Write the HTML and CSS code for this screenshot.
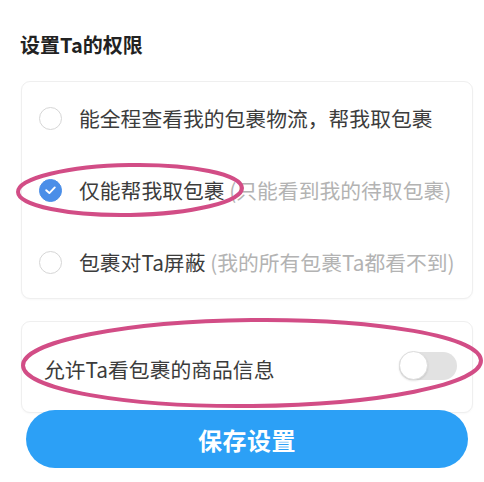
FILE: index.html
```html
<!DOCTYPE html>
<html lang="zh-CN">
<head>
<meta charset="utf-8">
<link rel="stylesheet" href="styles.css">
</head>
<body>
<div class="page">
  <h1 class="title">设置Ta的权限</h1>
  <div class="card options">
    <div class="row">
      <span class="radio"></span>
      <span class="label">能全程查看我的包裹物流，帮我取包裹</span>
    </div>
    <div class="row">
      <span class="radio checked">
        <svg viewBox="0 0 22 22" width="22" height="22"><polyline points="6.5,11.2 9.8,14.2 15.5,8.3" fill="none" stroke="#fff" stroke-width="2" stroke-linecap="round" stroke-linejoin="round"/></svg>
      </span>
      <span class="label">仅能帮我取包裹 <span class="hint">(只能看到我的待取包裹)</span></span>
    </div>
    <div class="row">
      <span class="radio"></span>
      <span class="label">包裹对Ta屏蔽 <span class="hint">(我的所有包裹Ta都看不到)</span></span>
    </div>
  </div>
  <div class="card switch-card">
    <span class="label">允许Ta看包裹的商品信息</span>
    <span class="toggle"><span class="knob"></span></span>
  </div>
  <button class="save">保存设置</button>
  <svg class="marks" viewBox="0 0 484 482" width="484" height="482">
    <ellipse cx="130" cy="190" rx="112" ry="25" fill="none" stroke="#d24d86" stroke-width="4" transform="rotate(-1 130 190)"/>
    <ellipse cx="252" cy="363" rx="229" ry="43" fill="none" stroke="#d24d86" stroke-width="4" transform="rotate(-0.6 252 363)"/>
  </svg>
</div>
</body>
</html>
```

FILE: styles.css
```css
* { box-sizing: border-box; }
html, body { margin: 0; padding: 0; background: #fff; }
body {
  font-family: "Noto Sans CJK SC", "Noto Sans", sans-serif;
  color: #3a3a3a;
}
.page {
  position: relative;
  width: 484px;
  height: 482px;
  padding-top: 30px;
  overflow: hidden;
}
.title {
  margin: 0 0 22px 20px;
  font-size: 20px;
  line-height: 29px;
  font-weight: 700;
  color: #222;
}
.card {
  margin-left: 21px;
  width: 452px;
  border: 1px solid #efefef;
  border-radius: 9px;
  background: #fff;
  box-shadow: 0 1px 2px rgba(0,0,0,0.03);
}
.options {
  padding-top: 0;
  margin-bottom: 22px;
}
.row {
  display: flex;
  align-items: center;
  height: 72px;
  padding-left: 17px;
}
.radio {
  width: 23px;
  height: 23px;
  border-radius: 50%;
  border: 1.5px solid #d6d6d6;
  flex: none;
  margin-right: 17px;
  display: flex;
  align-items: center;
  justify-content: center;
}
.radio.checked {
  background: #4a8ee8;
  border-color: #4a8ee8;
}
.label {
  font-size: 20.8px;
  line-height: 28px;
  color: #3c3c3c;
  white-space: nowrap;
}
.hint { color: #b3b3b3; }
.switch-card {
  height: 92px;
  display: flex;
  align-items: center;
  justify-content: space-between;
  padding: 4px 15px 0 22px;
}
.toggle {
  width: 58px;
  height: 28px;
  border-radius: 14px;
  background: #e2e2e2;
  display: flex;
  align-items: center;
  margin-bottom: 7px;
}
.knob {
  width: 29px;
  height: 29px;
  border-radius: 50%;
  background: #fff;
  border: 1px solid #dcdcdc;
  box-shadow: 0 1px 2px rgba(0,0,0,0.12);
}
.save {
  display: block;
  margin: -3px 0 0 26px;
  width: 442px;
  height: 58px;
  border: none;
  border-radius: 29px;
  background: #2ca0f6;
  color: #fff;
  font-family: "Noto Sans CJK SC", "Noto Sans", sans-serif;
  font-size: 24px;
  font-weight: 700;
  letter-spacing: 0.5px;
  position: relative;
}
.marks {
  position: absolute;
  left: 0;
  top: 0;
  pointer-events: none;
}
```
